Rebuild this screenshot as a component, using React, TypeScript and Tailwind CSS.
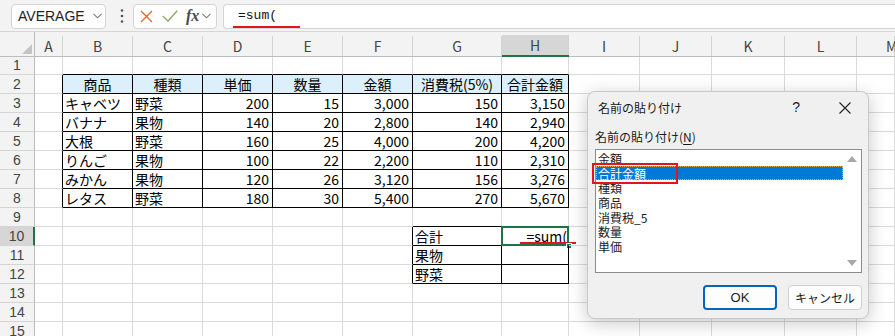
const COLS = ["A", "B", "C", "D", "E", "F", "G", "H", "I", "J", "K", "L", "M"];
const ROW_COUNT = 15;

const table: string[][] = [
  ["商品", "種類", "単価", "数量", "金額", "消費税(5%)", "合計金額"],
  ["キャベツ", "野菜", "200", "15", "3,000", "150", "3,150"],
  ["バナナ", "果物", "140", "20", "2,800", "140", "2,940"],
  ["大根", "野菜", "160", "25", "4,000", "200", "4,200"],
  ["りんご", "果物", "100", "22", "2,200", "110", "2,310"],
  ["みかん", "果物", "120", "26", "3,120", "156", "3,276"],
  ["レタス", "野菜", "180", "30", "5,400", "270", "5,670"],
];

const sumLabels: Record<number, string> = { 10: "合計", 11: "果物", 12: "野菜" };

const names = ["金額", "合計金額", "種類", "商品", "消費税_5", "数量", "単価"];

// r: 1-based row, c: 0-based column (A = 0)
function inTable(r: number, c: number) {
  if (r >= 2 && r <= 8 && c >= 1 && c <= 7) return true;
  if (r >= 10 && r <= 12 && c >= 6 && c <= 7) return true;
  return false;
}

function cellText(r: number, c: number) {
  if (r >= 2 && r <= 8 && c >= 1 && c <= 7) return table[r - 2][c - 1];
  if (c === 6 && sumLabels[r]) return sumLabels[r];
  return "";
}

function Chevron() {
  return (
    <svg width="9" height="6" viewBox="0 0 9 6" className="shrink-0">
      <path d="M0.5 0.8 L4.5 4.8 L8.5 0.8" fill="none" stroke="#7a7a7a" strokeWidth="1.1" />
    </svg>
  );
}

function FormulaBar() {
  return (
    <div className="h-[32px] bg-[#f3f3f3] border-b border-[#d6d6d6] flex items-center pl-[11px] pt-[1px]">
      <div className="w-[95px] h-[25px] bg-white border border-[#d4d4d4] rounded-[4px] flex items-center justify-between pl-[6px] pr-[3px]">
        <span className="text-[14px] text-[#222] font-['Liberation_Sans',sans-serif]">AVERAGE</span>
        <Chevron />
      </div>
      <svg width="6" height="16" viewBox="0 0 6 16" className="ml-[13px]">
        <circle cx="3" cy="2.5" r="1.3" fill="#555" />
        <circle cx="3" cy="8" r="1.3" fill="#555" />
        <circle cx="3" cy="13.5" r="1.3" fill="#555" />
      </svg>
      <div className="ml-[8px] w-[84px] h-[25px] bg-white border border-[#d4d4d4] rounded-[4px] flex items-center pl-[6px]">
        <svg width="13" height="13" viewBox="0 0 13 13">
          <path d="M1 1 L12 12 M12 1 L1 12" stroke="#e8692d" strokeWidth="1.4" />
        </svg>
        <svg width="16" height="12" viewBox="0 0 16 12" className="ml-[9px]">
          <path d="M0.8 6 L6 11 L15.2 0.8" fill="none" stroke="#8aa46a" strokeWidth="1.3" />
        </svg>
        <span className="ml-[8px] text-[16px] leading-none italic font-bold text-[#4a4a4a] font-['Liberation_Serif',serif]">
          fx
        </span>
        <span className="ml-[3px]">
          <Chevron />
        </span>
      </div>
      <div className="relative ml-[6px] flex-1 h-[25px] bg-white border border-r-0 border-[#d4d4d4] rounded-l-[4px] flex items-center pl-[14px]">
        <span className="text-[13px] text-[#111] font-['Liberation_Mono',monospace]">=sum(</span>
        <div className="absolute left-[9px] top-[21px] w-[67px] h-[2px] bg-[#e81123]" />
      </div>
    </div>
  );
}

function HeaderRow() {
  return (
    <>
      <div className="h-[25px] bg-[#f3f3f3] border-b border-r border-[#bcbcbc] flex items-end justify-end">
        <svg width="10" height="10" viewBox="0 0 10 10" className="mb-[2px] mr-[2px]">
          <polygon points="10,0 10,10 0,10" fill="#c4c4c4" />
        </svg>
      </div>
      {COLS.map((l, i) => {
        const sel = l === "H";
        return (
          <div
            key={l}
            className={`h-[25px] bg-[#f3f3f3] flex items-end border-b ${
              sel ? "border-b-2 border-b-[#217346]" : "border-b-[#bcbcbc]"
            }`}
          >
            <div
              className={`w-full h-[20px] flex items-center justify-center border-r border-[#d3d3d3] text-[14px] text-[#444] ${
                sel ? "bg-[#d6d6d6]" : ""
              } ${i === COLS.length - 1 ? "justify-start pl-[29px]" : ""}`}
            >
              {l}
            </div>
          </div>
        );
      })}
    </>
  );
}

function Cell({ r, c }: { r: number; c: number }) {
  const rb = inTable(r, c) || inTable(r, c + 1);
  const bb = inTable(r, c) || inTable(r + 1, c);
  const text = cellText(r, c);
  const isHead = r === 2 && c >= 1 && c <= 7;
  const isNum = r >= 3 && r <= 8 && c >= 3 && c <= 7;
  const active = r === 10 && c === 7;

  return (
    <div
      className={`relative ${r === 1 ? "h-[18px]" : "h-[19px]"} border-r border-b ${
        rb ? "border-r-black" : "border-r-[#dadada]"
      } ${bb ? "border-b-black" : "border-b-[#dadada]"} ${isHead ? "bg-[#dcf0fb]" : ""} flex items-center text-[14px] leading-none text-black whitespace-nowrap ${
        isHead ? "justify-center" : isNum ? "justify-end pr-[3px]" : "pl-[2px]"
      }`}
    >
      {text}
      {active && (
        <>
          <span className="absolute right-[1px] top-[1px] text-[14px] leading-[17px] text-black">=sum(</span>
          <div className="absolute left-[18px] top-[15px] w-[56px] h-[1.5px] bg-[#e81123]" />
          <div className="absolute -left-[1px] -top-[1px] -right-[1px] -bottom-[1px] border-2 border-[#217346]" />
          <div className="absolute -right-[4px] -bottom-[4px] w-[6px] h-[6px] bg-[#217346] border border-white" />
        </>
      )}
    </div>
  );
}

function Sheet() {
  const rows = Array.from({ length: ROW_COUNT }, (_, i) => i + 1);
  return (
    <div className="grid grid-cols-[35px_28px_70px_70px_70px_70px_70px_89px_67px_71px_72px_73px_72px_38px] font-['Noto_Sans_CJK_JP','Liberation_Sans',sans-serif]">
      <HeaderRow />
      {rows.map((r) => (
        <div key={r} className="contents">
          <div
            className={`${r === 1 ? "h-[18px]" : "h-[19px]"} border-b border-b-[#d5d5d5] flex items-center justify-center text-[14px] text-[#444] font-['Liberation_Sans',sans-serif] ${
              r === 10
                ? "bg-[#d6d6d6] border-r-2 border-r-[#217346]"
                : "bg-[#f3f3f3] border-r border-r-[#bcbcbc]"
            }`}
          >
            {r}
          </div>
          {COLS.map((_, c) => (
            <Cell key={c} r={r} c={c} />
          ))}
        </div>
      ))}
    </div>
  );
}

function Dialog() {
  return (
    <div className="absolute left-[587px] top-[91px] w-[282px] h-[228px] bg-[#f0f0f0] border border-[#c9c9c9] rounded-[8px] shadow-[0_4px_18px_rgba(0,0,0,0.22)] flex flex-col pl-[7px] pr-[6px] font-['Noto_Sans_CJK_JP','Liberation_Sans',sans-serif] text-[12px] text-[#1a1a1a]">
      <div className="h-[31px] flex items-center pl-[3px]">
        <span>名前の貼り付け</span>
        <span className="ml-auto mr-[39px] text-[14px] font-['Liberation_Sans',sans-serif]">?</span>
        <svg width="12" height="12" viewBox="0 0 12 12" className="mr-[11px]">
          <path d="M0.5 0.5 L11.5 11.5 M11.5 0.5 L0.5 11.5" stroke="#222" strokeWidth="1.1" />
        </svg>
      </div>
      <div className="mt-[6px] h-[16px] leading-[16px]">
        名前の貼り付け(<span className="underline underline-offset-2">N</span>)
      </div>
      <div className="relative mt-[4px] h-[124px] bg-white border border-[#8c8c8c] flex">
        <div className="flex-1 pt-[1px]">
          {names.map((n, i) => (
            <div
              key={n}
              className={`h-[14.7px] flex items-center pl-[2px] ${
                i === 1 ? "bg-[#0078d7] text-white outline-dotted outline-1 -outline-offset-1 outline-[#e0b050]" : ""
              }`}
            >
              <span className="leading-[13px]">{n}</span>
            </div>
          ))}
        </div>
        <div className="w-[18px] flex flex-col items-center justify-between py-[6px]">
          <svg width="10" height="6" viewBox="0 0 10 6">
            <polygon points="5,0 10,6 0,6" fill="#a8a8a8" />
          </svg>
          <svg width="10" height="6" viewBox="0 0 10 6">
            <polygon points="0,0 10,0 5,6" fill="#a8a8a8" />
          </svg>
        </div>
        <div className="absolute left-[-4px] top-[13px] w-[86px] h-[21px] border-2 border-[#e81123]" />
      </div>
      <div className="mt-[12px] flex justify-end gap-[11px]">
        <button className="w-[74px] h-[25px] rounded-[4px] bg-[#fdfdfd] border-2 border-[#0067c0] text-[13px] font-['Liberation_Sans',sans-serif]">
          OK
        </button>
        <button className="w-[74px] h-[25px] rounded-[4px] bg-[#fdfdfd] border border-[#d0d0d0] text-[12px]">
          キャンセル
        </button>
      </div>
    </div>
  );
}

export default function App() {
  return (
    <div className="relative w-[895px] h-[336px] overflow-hidden bg-white">
      <FormulaBar />
      <Sheet />
      <Dialog />
    </div>
  );
}
